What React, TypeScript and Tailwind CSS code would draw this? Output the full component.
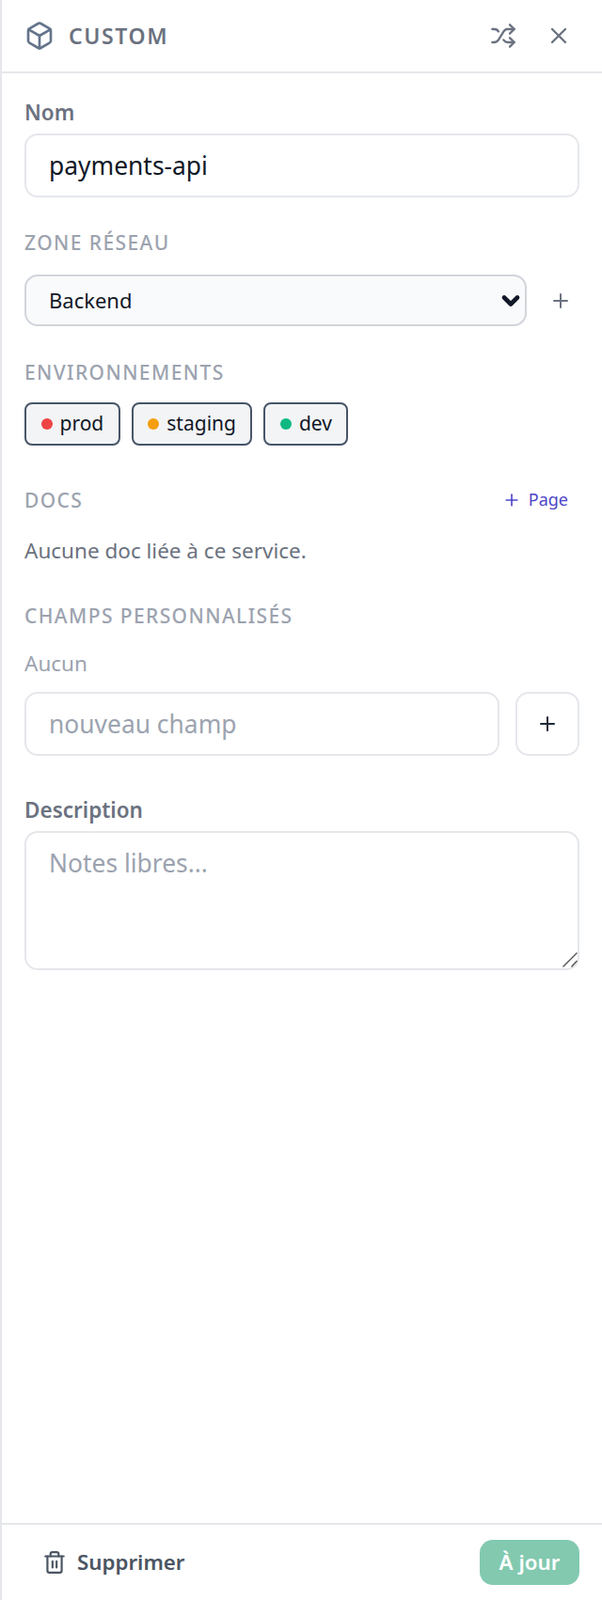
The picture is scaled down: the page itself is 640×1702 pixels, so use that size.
import { Box, ChevronDown, Plus, Shuffle, Trash2, X } from 'lucide-react';

const sectionTitle = 'text-[21px] leading-[26px] font-medium tracking-[1.4px] text-[#9ca3af] uppercase';
const fieldLabel = 'block text-[22.5px] leading-[28px] font-semibold text-[#6b7280]';

function EnvChip({ color, label }: { color: string; label: string }) {
  return (
    <button className="h-[46px] flex items-center gap-2 px-[15.5px] rounded-lg border-2 border-[#475569] bg-[#f3f4f6] text-[21px] text-[#111827]">
      <span className={`w-3 h-3 rounded-full ${color}`} />
      {label}
    </button>
  );
}

export default function App() {
  return (
    <div className="w-[640px] h-[1702px] flex flex-col bg-white border-l-2 border-[#e5e7eb] font-['Noto_Sans',sans-serif]">
      {/* Header */}
      <header className="h-[78px] shrink-0 flex items-center justify-between pl-6 pr-8 border-b-2 border-[#e5e7eb]">
        <div className="flex items-center gap-[15px]">
          <Box size={32} strokeWidth={2} className="text-[#64748b]" />
          <span className="text-[23px] font-semibold tracking-[1.6px] text-[#6b7280]">CUSTOM</span>
        </div>
        <div className="flex items-center gap-[31px]">
          <Shuffle size={28} className="text-[#6b7280]" />
          <X size={28} className="text-[#6b7280]" />
        </div>
      </header>

      <main className="flex-1 px-6 pt-[28px]">
        <label className={fieldLabel}>Nom</label>
        <input
          defaultValue="payments-api"
          className="mt-2 w-full h-[68px] px-6 rounded-[14px] border-2 border-[#e5e7eb] text-[26.4px] text-[#111827] outline-none"
        />

        <h3 className={`mt-[35px] ${sectionTitle}`}>Zone réseau</h3>
        <div className="mt-[21px] flex items-center gap-[24px]">
          <div className="relative">
            <select className="block w-[534px] h-[55px] px-6 appearance-none rounded-[14px] border-2 border-[#d1d5db] bg-[#f9fafb] text-[22px] text-[#111827]">
              <option>Backend</option>
            </select>
            <ChevronDown size={28} strokeWidth={4} className="absolute right-[3px] top-[14px] text-[#111827] pointer-events-none" />
          </div>
          <Plus size={24} className="text-[#6b7280]" />
        </div>

        <h3 className={`mt-[36px] ${sectionTitle}`}>Environnements</h3>
        <div className="mt-[19px] flex gap-3">
          <EnvChip color="bg-[#ef4444]" label="prod" />
          <EnvChip color="bg-[#f59e0b]" label="staging" />
          <EnvChip color="bg-[#10b981]" label="dev" />
        </div>

        <div className="mt-[44px] flex items-center justify-between pr-3">
          <h3 className={sectionTitle}>Docs</h3>
          <button className="flex items-center gap-2 text-[18px] text-[#4f46c8]">
            <Plus size={20} />
            Page
          </button>
        </div>
        <p className="mt-[27px] text-[22.5px] leading-[28px] text-[#6b7280]">Aucune doc liée à ce service.</p>

        <h3 className={`mt-[42px] ${sectionTitle}`}>Champs personnalisés</h3>
        <p className="mt-[24px] text-[22.5px] leading-[28px] text-[#9ca3af]">Aucun</p>
        <div className="mt-[16px] flex gap-[17px]">
          <input
            placeholder="nouveau champ"
            className="flex-1 min-w-0 h-[68px] px-6 rounded-[14px] border-2 border-[#e5e7eb] text-[26.4px] text-[#111827] placeholder:text-[#9ca3af] outline-none"
          />
          <button className="w-[68px] h-[68px] flex items-center justify-center rounded-[14px] border-2 border-[#e5e7eb] text-[#1f2937]">
            <Plus size={24} />
          </button>
        </div>

        <label className={`mt-[44px] ${fieldLabel}`}>Description</label>
        <div className="relative mt-2">
          <textarea
            placeholder="Notes libres..."
            className="block w-full h-[148px] px-6 py-[13px] resize-none rounded-[14px] border-2 border-[#e5e7eb] text-[26.4px] placeholder:text-[#9ca3af] outline-none"
          />
          {/* resize grip, drawn bigger than the native one */}
          <svg width="16" height="16" viewBox="0 0 16 16" className="absolute right-[2px] bottom-[3px] text-[#555555] pointer-events-none">
            <path d="M0.5 15.5 L15.5 0.5 M9.5 15.5 L15.5 9" stroke="currentColor" strokeWidth="1.4" fill="none" />
          </svg>
        </div>
      </main>

      {/* Footer */}
      <footer className="h-[82px] shrink-0 flex items-center justify-between pl-[43px] pr-6 border-t-2 border-[#e5e7eb]">
        <button className="flex items-center gap-[11px] text-[22.3px] font-semibold text-[#4b5563]">
          <Trash2 size={26} strokeWidth={2} />
          Supprimer
        </button>
        <button className="w-[106px] h-[48px] rounded-[14px] bg-[#82c9b0] text-[22.3px] font-semibold text-white">À jour</button>
      </footer>
    </div>
  );
}
